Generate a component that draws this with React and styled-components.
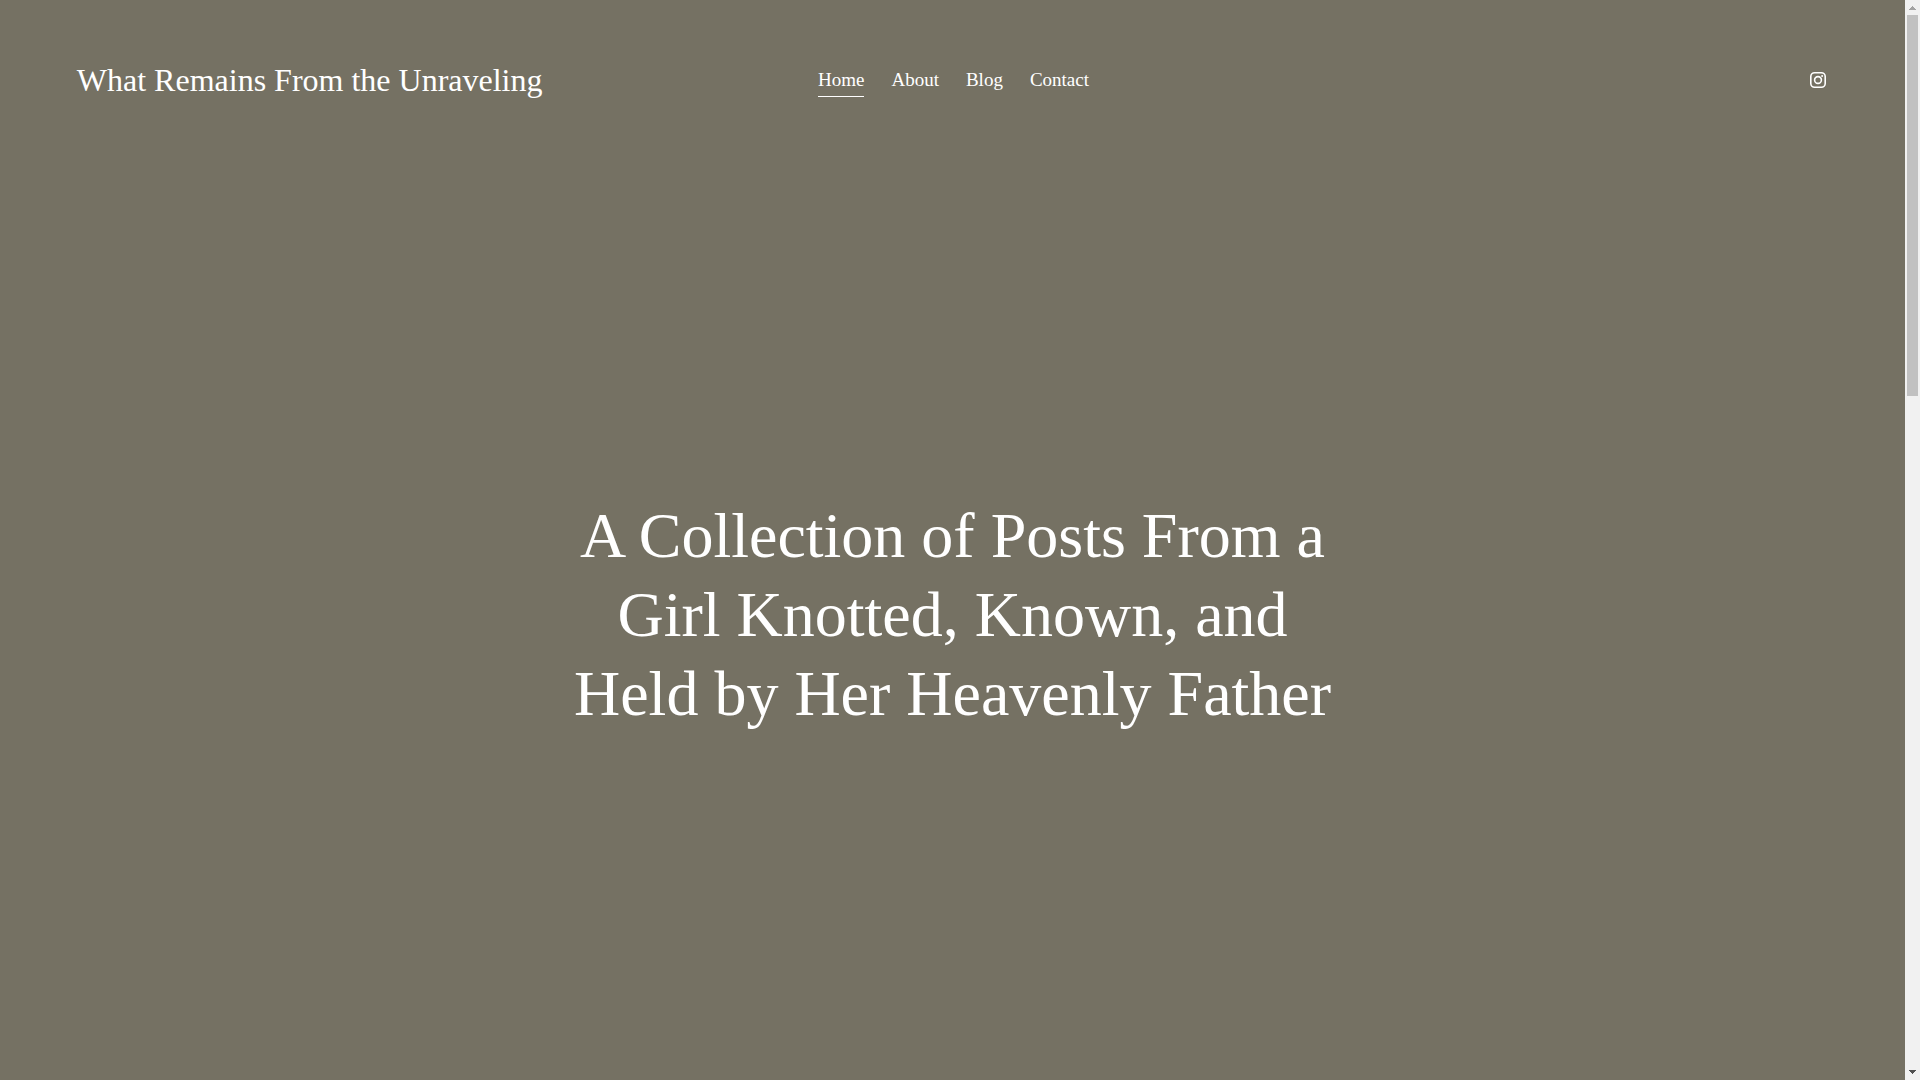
import styled, { createGlobalStyle } from "styled-components";

const GlobalStyle = createGlobalStyle`
  * {
    box-sizing: border-box;
  }
  body {
    margin: 0;
    background-color: #757163;
    color: #fff;
    font-family: "Liberation Serif", "Times New Roman", serif;
  }
`;

const Page = styled.div`
  display: flex;
  min-height: 100vh;
`;

const Content = styled.div`
  flex: 1;
  display: flex;
  flex-direction: column;
`;

const Header = styled.header`
  display: flex;
  align-items: center;
  padding: 60px 4vw;
`;

const Side = styled.div`
  flex: 1;
  display: flex;
  justify-content: ${(props) => (props.$end ? "flex-end" : "flex-start")};
`;

const SiteTitle = styled.a`
  color: #fff;
  font-size: 32px;
  line-height: 40px;
  text-decoration: none;
  white-space: nowrap;
`;

const Nav = styled.nav`
  display: flex;
  gap: 27px;
  padding-left: 2px;
`;

const NavLink = styled.a`
  padding: 4px 0;
  border-bottom: 1px solid ${(props) => (props.$active ? "#fff" : "transparent")};
  color: #fff;
  font-size: 19px;
  line-height: 24px;
  text-decoration: none;
`;

const SocialLink = styled.a`
  display: flex;
  padding: 1px;
  color: #fff;
`;

const Hero = styled.main`
  flex: 1;
  display: flex;
  align-items: center;
  justify-content: center;
  padding: 0 4vw 12px;
`;

const Headline = styled.h1`
  max-width: 800px;
  margin: 0;
  font-size: 64px;
  font-weight: 400;
  line-height: 79px;
  text-align: center;
`;

const Scrollbar = styled.div`
  display: flex;
  flex-direction: column;
  width: 15px;
  background-color: #f1f1f1;
`;

const Track = styled.div`
  flex: 1;
  padding: 0 2px;
`;

const Thumb = styled.div`
  height: 36.3%;
  background-color: #c1c1c1;
`;

const links = [
  { label: "Home", href: "#home", active: true },
  { label: "About", href: "#about" },
  { label: "Blog", href: "#blog" },
  { label: "Contact", href: "#contact" },
];

function InstagramIcon() {
  return (
    <svg width="18" height="18" viewBox="0 0 18 18" fill="none" aria-hidden="true">
      <rect x="1.8" y="1.8" width="14.4" height="14.4" rx="3.8" stroke="currentColor" strokeWidth="1.6" />
      <circle cx="9" cy="9" r="3.4" stroke="currentColor" strokeWidth="1.6" />
      <circle cx="13.1" cy="4.9" r="1" fill="currentColor" />
    </svg>
  );
}

function Arrow({ d, color }) {
  return (
    <svg width="15" height="15" viewBox="0 0 15 15" shapeRendering="crispEdges">
      <path d={d} fill={color} />
    </svg>
  );
}

export default function App() {
  return (
    <>
      <GlobalStyle />
      <Page>
        <Content>
          <Header>
            <Side>
              <SiteTitle href="#home">What Remains From the Unraveling</SiteTitle>
            </Side>
            <Nav>
              {links.map((link) => (
                <NavLink key={link.label} href={link.href} $active={link.active}>
                  {link.label}
                </NavLink>
              ))}
            </Nav>
            <Side $end>
              <SocialLink href="#instagram" aria-label="Instagram">
                <InstagramIcon />
              </SocialLink>
            </Side>
          </Header>
          <Hero>
            <Headline>
              A Collection of Posts From a Girl Knotted, Known, and Held by Her Heavenly Father
            </Headline>
          </Hero>
        </Content>
        <Scrollbar aria-hidden="true">
          <Arrow color="#a3a3a3" d="M7 6h1v1h1v1h1v1h1v1H4V9h1V8h1V7h1z" />
          <Track>
            <Thumb />
          </Track>
          <Arrow color="#505050" d="M4 5h7v1h-1v1H9v1H8v1H7V8H6V7H5V6H4z" />
        </Scrollbar>
      </Page>
    </>
  );
}
